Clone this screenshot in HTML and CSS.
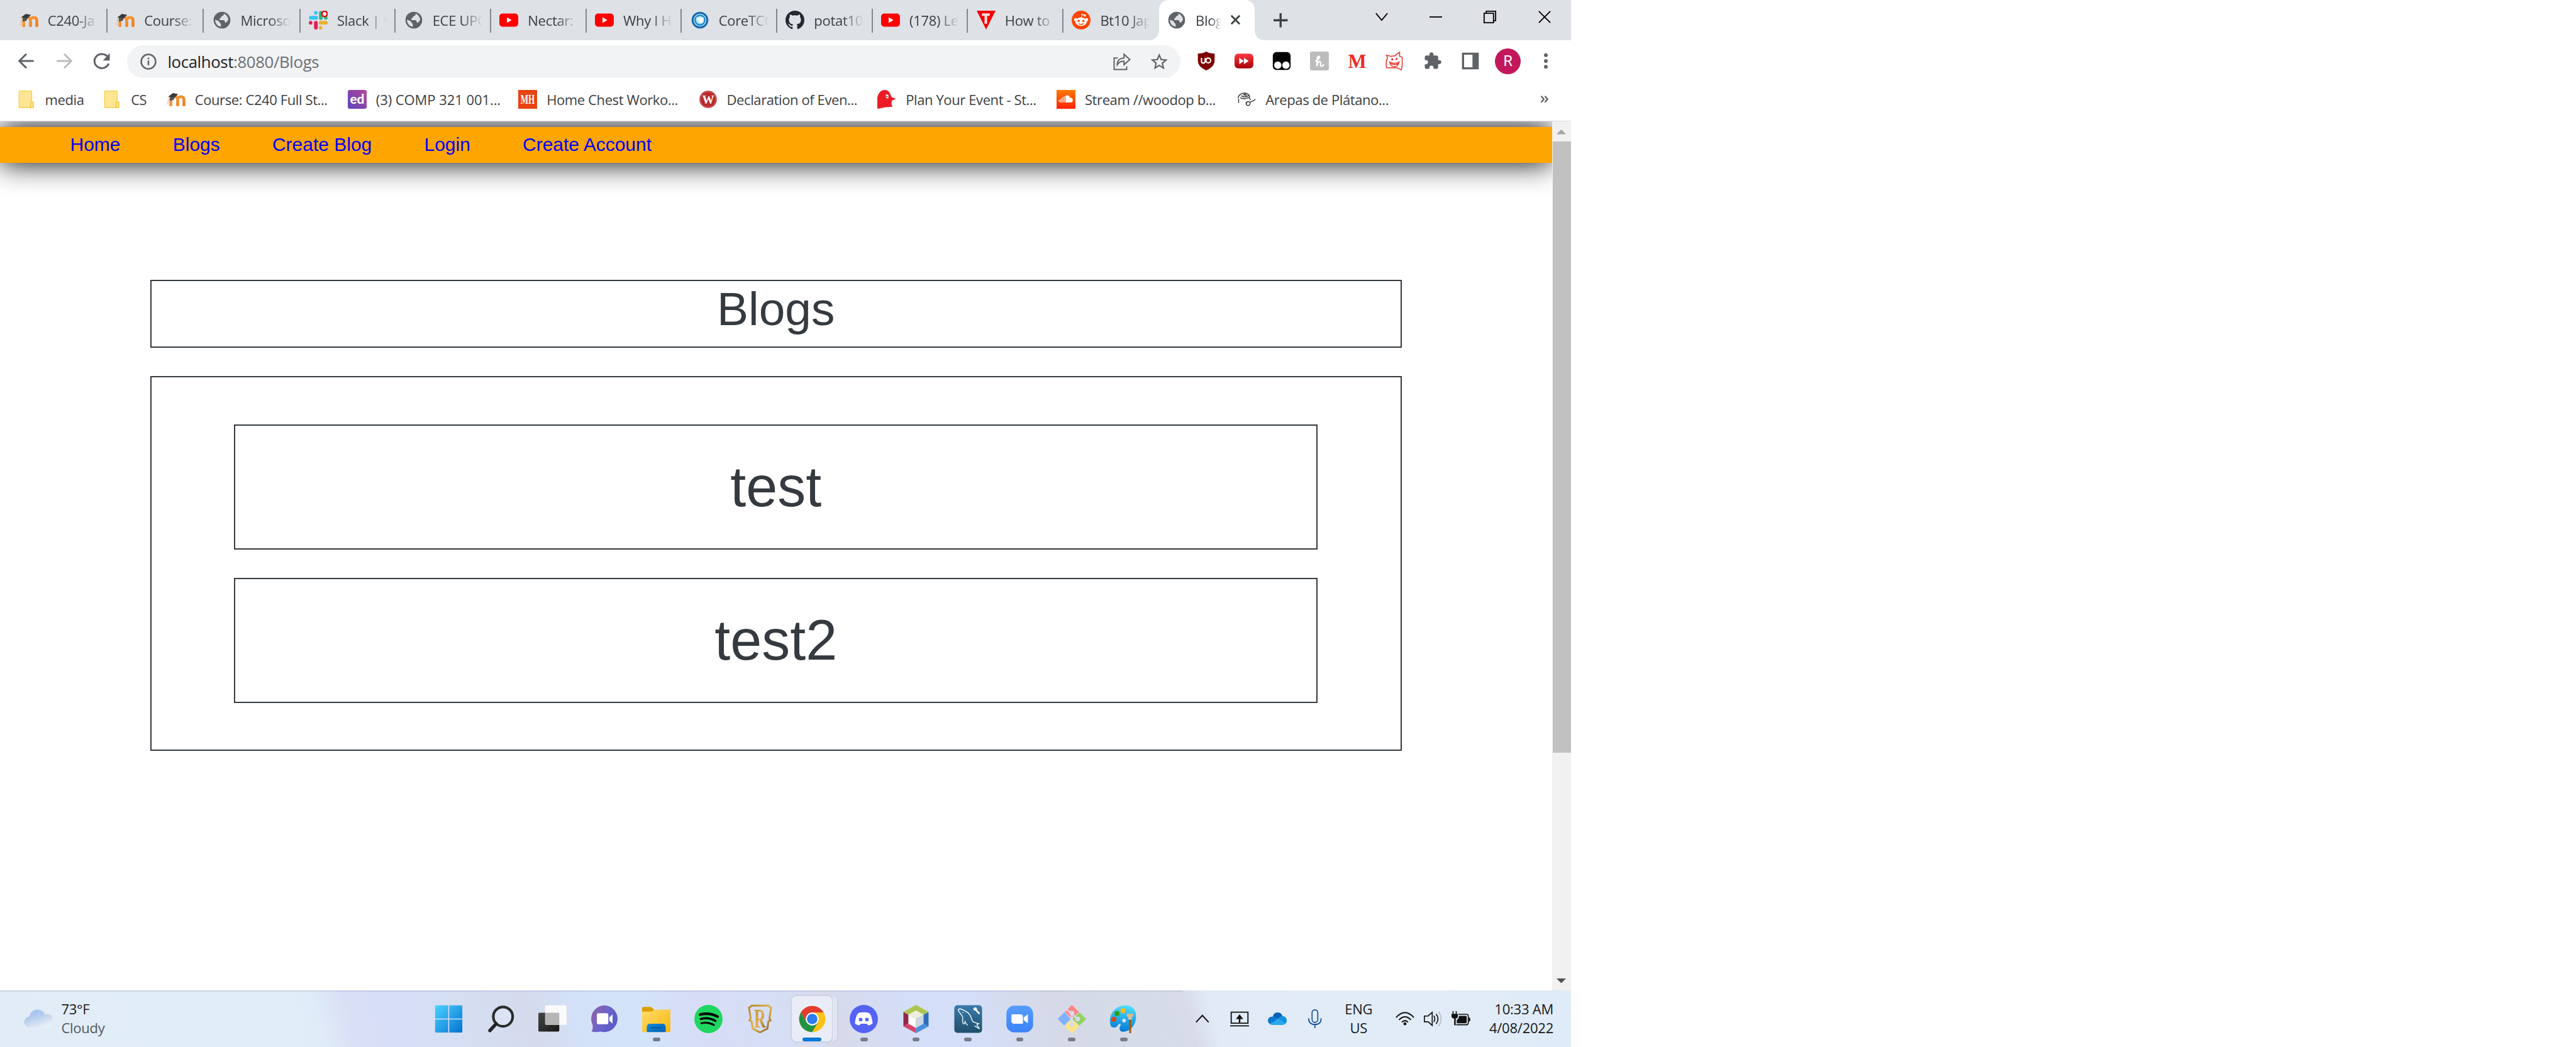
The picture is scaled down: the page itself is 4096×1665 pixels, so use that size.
FILE: index.html
```html
<!DOCTYPE html>
<html lang="en">
<head>
<meta charset="utf-8">
<title>Blogs</title>
<link rel="stylesheet" href="styles.css">
</head>
<body>
<svg class="defs" aria-hidden="true">
  <defs>
    <linearGradient id="g-orange" x1="0" y1="0" x2="1" y2="1"><stop offset="0" stop-color="#f9a13d"/><stop offset="1" stop-color="#ee7b1d"/></linearGradient>
    <linearGradient id="g-ed" x1="1" y1="0" x2="0" y2="1"><stop offset="0" stop-color="#b8439a"/><stop offset="1" stop-color="#5b46bd"/></linearGradient>
    <linearGradient id="g-sc" x1="0" y1="0" x2="0" y2="1"><stop offset="0" stop-color="#ff7a00"/><stop offset="1" stop-color="#ff2200"/></linearGradient>
    <linearGradient id="g-ff" x1="0" y1="0" x2="0" y2="1"><stop offset="0" stop-color="#fb3a41"/><stop offset="1" stop-color="#a90009"/></linearGradient>
    <linearGradient id="g-win" gradientUnits="userSpaceOnUse" x1="0" y1="0" x2="54" y2="54"><stop offset="0" stop-color="#4fd3ff"/><stop offset="1" stop-color="#0070d0"/></linearGradient>
    <linearGradient id="g-chat" x1="0" y1="0.2" x2="1" y2="0.8"><stop offset="0" stop-color="#8f62a8"/><stop offset=".5" stop-color="#6a63cc"/><stop offset="1" stop-color="#5658c8"/></linearGradient>
    <linearGradient id="g-folder" x1="0" y1="0" x2="1" y2="1"><stop offset="0" stop-color="#ffdc6b"/><stop offset="1" stop-color="#f9b60a"/></linearGradient>
    <linearGradient id="g-blue" x1="0" y1="0" x2="1" y2="1"><stop offset="0" stop-color="#118bdc"/><stop offset="1" stop-color="#0660b5"/></linearGradient>
    <linearGradient id="g-gold" x1="0" y1="0" x2="1" y2="1"><stop offset="0" stop-color="#b98628"/><stop offset=".5" stop-color="#e3b247"/><stop offset="1" stop-color="#84591a"/></linearGradient>
    <linearGradient id="g-sql" x1="0" y1="0" x2="0" y2="1"><stop offset="0" stop-color="#3a7ca8"/><stop offset="1" stop-color="#1f4f6c"/></linearGradient>
    <linearGradient id="g-zoom" x1="0" y1="0" x2="0" y2="1"><stop offset="0" stop-color="#559dff"/><stop offset="1" stop-color="#3c82fb"/></linearGradient>
    <linearGradient id="g-paint" x1=".6" y1="0" x2=".5" y2="1"><stop offset="0" stop-color="#4fe0ff"/><stop offset="1" stop-color="#0378d6"/></linearGradient>
    <linearGradient id="g-dark" x1="0" y1="0" x2="1" y2="1"><stop offset="0" stop-color="#474747"/><stop offset="1" stop-color="#181818"/></linearGradient>
    <linearGradient id="g-cloud" x1="0" y1="0" x2=".8" y2="1"><stop offset="0" stop-color="#9dbde4"/><stop offset="1" stop-color="#f0f4f9"/></linearGradient>
    <linearGradient id="g-cloud2" x1=".2" y1="0" x2=".5" y2="1"><stop offset="0" stop-color="#9fbfea"/><stop offset="1" stop-color="#cfe0f8"/></linearGradient>
    <radialGradient id="g-core"><stop offset="0" stop-color="#e8f8ff"/><stop offset=".45" stop-color="#9fdcf5"/><stop offset=".6" stop-color="#1188cc"/><stop offset="1" stop-color="#0c4a8c"/></radialGradient>
  </defs>
  <symbol id="moodle" viewBox="0 0 36 36"><path d="M8 31V19q0-6 6.500-6t6.500 6v12M21 31V19q0-6 6-6t6 6v12" fill="none" stroke="url(#g-orange)" stroke-width="5.500"/><path d="M3 13 12 6 22 8 14 16Z" fill="#3a3a3a"/><path d="M6 14v7l8-2v-5z" fill="#555"/><path d="M4 14 2 28" stroke="#e9b9a0" stroke-width="1.500"/></symbol>
  <symbol id="globe" viewBox="0 0 36 36"><circle cx="18" cy="18" r="16" fill="#5f6368"/><path d="M21 5.500c1 2 0 4-2 4.500-3 .5-2 3-4 4-3 1-2 4 1 4h5c2 1 3 3 3 5 3 0 4-3 6-5A13 13 0 0 0 21 5.500ZM5 17c4 2 8 2 8 5 0 2 4 2 3 5v4A13 13 0 0 1 5 17Z" fill="#dee1e6"/></symbol>
  <symbol id="slack" viewBox="0 0 36 36"><g stroke-width="7" stroke-linecap="round"><path d="M4 13.500h10M13.500 4v0" stroke="#36c5f0"/><path d="M23 4v10" stroke="#2eb67d"/><path d="M32.500 13.500v0" stroke="#2eb67d"/><path d="M22.500 23h10M22.500 32.500v0" stroke="#ecb22e"/><path d="M13.500 23v9.500M3.500 23v0" stroke="#e01e5a"/></g><circle cx="30" cy="6" r="5" fill="#fff" stroke="#e8050b" stroke-width="3"/></symbol>
  <symbol id="youtube" viewBox="0 0 36 36"><rect y="5.500" width="36" height="25" rx="6" fill="#f00"/><path d="M14.500 12.500 23.500 18l-9 5.500z" fill="#fff"/></symbol>
  <symbol id="core" viewBox="0 0 36 36"><circle cx="18" cy="18" r="15" fill="url(#g-core)" stroke="#2273b3" stroke-width="2"/><circle cx="18" cy="18" r="11.500" fill="none" stroke="#c8effc" stroke-width="1.500"/><path d="M11 13h14l-1 10h-7l-1-5h-4z" fill="#f4fcff"/></symbol>
  <symbol id="github" viewBox="0 0 16 16"><path fill="#24292f" d="M8 0C3.580 0 0 3.580 0 8c0 3.540 2.290 6.530 5.470 7.590.4.070.55-.17.55-.38 0-.19-.01-.82-.01-1.490-2.010.37-2.530-.49-2.690-.94-.09-.23-.48-.94-.82-1.130-.28-.15-.68-.52-.01-.53.63-.01 1.080.58 1.230.82.72 1.210 1.870.87 2.330.66.070-.52.280-.87.510-1.070-1.780-.2-3.640-.89-3.640-3.950 0-.87.310-1.590.82-2.150-.08-.2-.36-1.020.08-2.120 0 0 .67-.21 2.200.82.640-.18 1.320-.27 2-.27s1.360.09 2 .27c1.530-1.040 2.200-.82 2.200-.82.440 1.100.160 1.920.080 2.120.510.560.820 1.270.820 2.150 0 3.070-1.870 3.750-3.650 3.950.290.250.540.730.540 1.480 0 1.070-.01 1.930-.01 2.200 0 .210.150.460.550.380A8.010 8.010 0 0 0 16 8c0-4.420-3.580-8-8-8z"/></symbol>
  <symbol id="tri" viewBox="0 0 36 36"><path d="M0 0h36L18 36z" fill="#f40000"/><path d="M10 5h15v5h-5v15h-5V10h-5z" fill="#f3dede"/></symbol>
  <symbol id="reddit" viewBox="0 0 36 36"><circle cx="18" cy="18" r="18" fill="#ff4500"/><ellipse cx="18" cy="21" rx="11" ry="8" fill="#fff"/><circle cx="7.500" cy="17" r="3" fill="#fff"/><circle cx="28.500" cy="17" r="3" fill="#fff"/><circle cx="25" cy="9" r="2.200" fill="#fff"/><path d="m18 14 2-7 5 1.500" fill="none" stroke="#fff" stroke-width="1.500"/><circle cx="13.500" cy="19.500" r="2.200" fill="#ff4500"/><circle cx="22.500" cy="19.500" r="2.200" fill="#ff4500"/><path d="M13 24.500q5 3.500 10 0" fill="none" stroke="#ff4500" stroke-width="1.600"/></symbol>
  <symbol id="yfolder" viewBox="0 0 36 36"><path d="M5 2h22q1 0 1 1v20h3v10q0 1-1 1H5q-1 0-1-1V3q0-1 1-1z" fill="#ffe694" stroke="#f5d25a" stroke-width="1.800"/><path d="M26 34v-9q0-2 2.500-2T31 25v7q0 2-2 2z" fill="#ffe694" stroke="#f0c544" stroke-width="1.500"/></symbol>
  <symbol id="plan" viewBox="0 0 36 36"><path d="M0 36V14Q4 0 14 0q9 0 12 11l2 3 8 3-8 3-1 7 2 5-13 1z" fill="#ed1c24"/><path d="M16 9h5v7h-4z" fill="#fff"/><circle cx="18.500" cy="13" r="1.200" fill="#222"/></symbol>
  <symbol id="cloudwave" viewBox="0 0 36 36"><rect width="36" height="36" fill="url(#g-sc)"/><path d="M5 19v4M7.500 17v7M10 15v9M12.500 13v11M15 12v12" stroke="#fff" stroke-width="1.300"/><path d="M17 24V11q6-3 9 4 5 0 5 4.500T27 24z" fill="#fff"/></symbol>
  <symbol id="arepas" viewBox="0 0 36 36"><g fill="none" stroke="#333" stroke-width="1.700"><path d="M2 16c0-5 5-10 12-10s10 4 10 8M8 11c4 3 11 3 15-1M6 15c6 3 12 2 17-1M3 17v8M23 15l3 4M17 26c0-4 8-5 8-1s-3 6-6 4-1-4 0-4M25 23c4-1 7-2 10-5"/></g><path d="M11 9q5-4 9 1-5 3-9-1z" fill="#555"/></symbol>
  <symbol id="ublock" viewBox="0 0 36 36"><path d="M18 0q7 4 16 4v14q0 11-16 18Q2 29 2 18V4q9 0 16-4z" fill="#7e0000"/><path d="M9 12v7q0 3 3 3t4-3v-7" fill="none" stroke="#fff" stroke-width="2.600"/><circle cx="22" cy="17" r="4.500" fill="none" stroke="#fff" stroke-width="2.600"/></symbol>
  <symbol id="ffwd" viewBox="0 0 36 36"><rect y="4" width="36" height="28" rx="7" fill="url(#g-ff)"/><path d="m9 12 9 6-9 6zM18 12l9 6-9 6z" fill="#fff"/></symbol>
  <symbol id="tamper" viewBox="0 0 36 36"><rect x="1" y="1" width="34" height="34" rx="7" fill="#000"/><circle cx="10.500" cy="26" r="7" fill="#fff"/><circle cx="26" cy="26" r="7" fill="#fff"/></symbol>
  <symbol id="honey" viewBox="0 0 36 36"><rect width="36" height="36" rx="4" fill="#bcbcbc"/><path d="M11 18c6-3 9-8 6-9-4-1-3 8-4 19 1-6 4-10 6-9 3 1-1 9 3 9 1 0 3-1 4-3" fill="none" stroke="#fff" stroke-width="2.700" stroke-linecap="round"/></symbol>
  <symbol id="fox" viewBox="0 0 36 36"><g fill="none" stroke="#e5352b" stroke-width="1.800"><path d="M2 7 10 9 18 8 27 1V9l5 2v16l-2 8-8-4H2Q0 18 4 12z"/><path d="M8 20q9 5 18 0-2 9-9 9t-9-9zM10 23q8 4 14 0"/></g><circle cx="13" cy="15" r="2" fill="#e5352b"/><circle cx="21" cy="14" r="2" fill="#e5352b"/></symbol>
  <symbol id="puzzle" viewBox="0 0 24 24"><path fill="#5f6368" d="M20.500 11H19V7c0-1.100-.9-2-2-2h-4V3.500a2.500 2.500 0 0 0-5 0V5H4c-1.100 0-1.990.9-1.990 2v3.800H3.500c1.490 0 2.700 1.210 2.700 2.700s-1.210 2.700-2.700 2.700H2V20c0 1.100.9 2 2 2h3.800v-1.500c0-1.490 1.210-2.700 2.700-2.700s2.700 1.210 2.700 2.700V22H17c1.100 0 2-.9 2-2v-4h1.500a2.500 2.500 0 0 0 0-5z"/></symbol>
  <symbol id="panel" viewBox="0 0 36 36"><path fill="#5f6368" fill-rule="evenodd" d="M2 2h32v32H2zM6 6v24h16V6z"/></symbol>
  <symbol id="back" viewBox="0 0 36 36"><path d="M32 18H5M18 4.500 4.500 18 18 31.500" fill="none" stroke="currentColor" stroke-width="3.600"/></symbol>
  <symbol id="reload" viewBox="0 0 36 36"><path d="M31 23a14 13.500 0 1 1-2-13" fill="none" stroke="#5f6368" stroke-width="3.600"/><path d="M33 3v14H20z" fill="#5f6368"/></symbol>
  <symbol id="info" viewBox="0 0 36 36"><circle cx="18" cy="18" r="13.800" fill="none" stroke="#5f6368" stroke-width="3"/><path d="M18 16v9M18 10.500v3" stroke="#5f6368" stroke-width="3"/></symbol>
  <symbol id="share" viewBox="0 0 36 36"><path d="M10 11H3v22h24v-6M9 24C9 14 16 11 22 11V4l11 10-11 10v-7c-6 0-10 2-13 7z" fill="none" stroke="#5f6368" stroke-width="2.400"/></symbol>
  <symbol id="star" viewBox="0 0 24 24"><path fill="#5f6368" d="m22 9.240-7.190-.62L12 2 9.190 8.630 2 9.240l5.460 4.730L5.820 21 12 17.270 18.180 21l-1.630-7.030zM12 15.400l-3.760 2.270 1-4.280-3.320-2.880 4.380-.38L12 6.100l1.710 4.040 4.380.38-3.320 2.880 1 4.280z"/></symbol>
  <symbol id="start" viewBox="0 0 54 54"><path fill="url(#g-win)" d="M1 3q0-2 2-2h23v25H1zM28 1h23q2 0 2 2v23H28zM1 28h25v25H3q-2 0-2-2zM28 28h25v23q0 2-2 2H28z"/></symbol>
  <symbol id="search" viewBox="0 0 54 54"><circle cx="31" cy="22.500" r="18.500" fill="#dfe5f6" fill-opacity=".7" stroke="#2b2b2b" stroke-width="5"/><path d="M18 36 6 49" stroke="#242424" stroke-width="6.500" stroke-linecap="round"/></symbol>
  <symbol id="taskview" viewBox="0 0 54 54"><rect y="15" width="40" height="36" rx="2" fill="url(#g-dark)"/><rect x="13" y="1" width="41" height="37" rx="2" fill="#fafafa"/><path d="M13 15h25q2 0 2 2v21H15q-2 0-2-2z" fill="#b6b6b6"/></symbol>
  <symbol id="chat" viewBox="0 0 54 54"><path d="M27 1A25.500 25.500 0 1 1 19 51Q9 53 2 51 5 46 4 38A25.500 25.500 0 0 1 27 1z" fill="url(#g-chat)"/><rect x="12" y="16" width="22" height="21" rx="3" fill="#fff"/><path d="m36 24 6-6v18l-6-6z" fill="#fff"/></symbol>
  <symbol id="files" viewBox="0 0 54 54"><path d="M0 6q0-2 2-2h15l6 5v5H0z" fill="#dd9d04"/><path d="M0 13h18l5-4h29q2 0 2 2v39q0 2-2 2H2q-2 0-2-2z" fill="url(#g-folder)"/><path d="M9 52V43q0-7 6-7h24q6 0 6 7v9z" fill="url(#g-blue)"/><path d="M16 43.500h22" stroke="#07529b" stroke-width="2"/></symbol>
  <symbol id="spotify" viewBox="0 0 54 54"><circle cx="27" cy="27" r="27" fill="#1ed760"/><g fill="none" stroke="#000" stroke-linecap="round"><path d="M11 18.500q18-4.500 33.500 4" stroke-width="5"/><path d="M12.500 27q15-4 28 3.800" stroke-width="4.200"/><path d="M13.500 35q12-3 24 3.500" stroke-width="3.600"/></g></symbol>
  <symbol id="chrome" viewBox="0 0 54 54"><circle cx="27" cy="27" r="25" fill="#fbc116"/><path d="M5.350 14.500A25 25 0 0 1 48.650 14.500L27 14.500 16.200 33z" fill="#e33b2e"/><path d="M5.350 14.500A25 25 0 0 0 27 52L37.800 33.200 27 27 16.200 33.200z" fill="#229342"/><circle cx="27" cy="27" r="12.500" fill="#fff"/><circle cx="27" cy="27" r="10" fill="#2d7cf0"/></symbol>
  <symbol id="discord" viewBox="0 0 54 54"><circle cx="27" cy="27" r="27" fill="#5562f6"/><path d="M18 15q9-2 18 0 6 2 8 20-4 4-9 4l-2-3h-12l-2 3q-5 0-9-4 2-18 8-20z" fill="#fff"/><circle cx="21" cy="28" r="3.500" fill="#5562f6"/><circle cx="33" cy="28" r="3.500" fill="#5562f6"/></symbol>
  <symbol id="netbeans" viewBox="0 0 54 54"><path d="M27 0 51 13.500 27 27 3 13.500z" fill="#aec64f"/><path d="M3 13.500 27 27 3 41z" fill="#932845"/><path d="M3 41 27 27v27z" fill="#d5446a"/><path d="M27 54V27l24 14z" fill="#478fdf"/><path d="M51 41 27 27l24-13.500z" fill="#2f6dba"/><path d="m27 10.500 14.500 8L27 27l-14.500-8.500z" fill="#ecefde"/><path d="M12.500 18.500 27 27v17l-14.500-8z" fill="#fbfbfb"/><path d="M41.500 18.500 27 27v17l14.500-8z" fill="#ccd7e3"/></symbol>
  <symbol id="mysql" viewBox="0 0 54 54"><rect x=".5" y=".5" width="53" height="53" rx="6" fill="url(#g-sql)"/><g fill="none" stroke="#eaf6fb" stroke-width="1.700"><path d="M26 39c-2-2-4-3-5-7-1 3-1 5-3 4-4-3 0-9-2-14-2-4-8-9-8-13 3-4 9 1 14 3 9 4 11 13 13 19 2 2 8 4 12 5-3 1-4 2-3 3s3 4 5 7c-4-3-8-4-10-6"/></g><circle cx="17" cy="14.500" r="1" fill="#fff"/><path d="M38 6c3-3 7 1 6 4l6 6-3 2-6-7c-4 0-5-3-4-5l3 2z" fill="#fff"/></symbol>
  <symbol id="zoom" viewBox="0 0 54 54"><rect x="1.500" y="1.500" width="51" height="51" rx="15" fill="url(#g-zoom)"/><path d="M14 18h14q5 0 5 5v13H16q-5 0-5-5V21q0-3 3-3z" fill="#fff"/><path d="m34.500 24 8-6v17l-8-6z" fill="#fff"/></symbol>
  <symbol id="git" viewBox="0 0 54 54"><path d="m27 0 13.500 13.500L27 26 13.500 13.500z" fill="#ff8585"/><path d="m12.500 13.500 12 13.500-12.500 12.500L0 27z" fill="#80b1ff"/><path d="M41.500 14.500 54 27 41.500 39.500 28 27z" fill="#8ed35c"/><path d="m27 28 13.500 13L27 54 13.500 41z" fill="#ffe57e"/><g stroke="#d9dbe8" stroke-width="3" fill="#d9dbe8"><path d="m16 8 11 9v20M27 17l11 10" fill="none"/><circle cx="27" cy="16" r="3"/><circle cx="38" cy="27" r="3"/><circle cx="27" cy="38" r="3"/></g></symbol>
  <symbol id="paint" viewBox="0 0 54 54"><path d="M2 38C-3 18 12 1 31 1c14 0 20 9 20 21 0 17-10 27-22 29-8 2-11-4-9-9 2-4 2-6 0-6-4 0-4 7-9 7-5 1-8-1-9-5z" fill="url(#g-paint)"/><circle cx="28" cy="30" r="3.500" fill="#d9e4f3"/><circle cx="26" cy="11" r="4.800" fill="#f9b80c"/><circle cx="14.500" cy="16.500" r="4.800" fill="#2f9f16"/><circle cx="8.500" cy="27.500" r="4.800" fill="#d44a14"/><path d="M37 26h5l-.500 28h-3.500z" fill="#a85c0a"/><path d="M36.500 25h6v3h-6z" fill="#d5d8dc"/><path d="M33 17h13q-1 5-3.500 8h-6Q33 22 33 17z" fill="#e6b98a"/></symbol>
  <symbol id="weather" viewBox="0 0 54 36"><circle cx="26" cy="16" r="15.500" fill="url(#g-cloud2)"/><path d="M12 14a12 11 0 0 1 12 7h6q2-11 12-11a12 12 0 0 1 6 24q-2 1-6 1H10A10.500 10.500 0 0 1 12 14z" fill="url(#g-cloud)"/></symbol>
  <symbol id="upload" viewBox="0 0 36 30"><path d="M2 2h32v21H2zM0 28h36" fill="none" stroke="#111" stroke-width="2.200"/><path d="m18 6 7 9h-5.500v7h-3v-7H11z" fill="#111"/></symbol>
  <symbol id="onedrive" viewBox="0 0 36 24"><path d="M9 9Q11 0 19 0q7 0 9 8l-9 5z" fill="#0a60b8"/><path d="M7 23A7.500 7.500 0 0 1 8 8q6-1 11 4l-12 11z" fill="#0b78d0"/><path d="M19 13q3-6 9-6 8 1 8 9 0 7-7 7z" fill="#1490df"/><path d="M4 22 20 12l14 9q-2 3-6 3H8q-3 0-4-2z" fill="#29a8ec"/></symbol>
  <symbol id="mic" viewBox="0 0 26 36"><rect x="7.500" y="1" width="11" height="24" rx="5.500" fill="none" stroke="#0b4a9e" stroke-width="2"/><path d="M1 17q0 12 12 12t12-12M13 29v7" fill="none" stroke="#0b4a9e" stroke-width="2"/></symbol>
  <symbol id="wifi" viewBox="0 0 36 26"><g fill="none" stroke="#111" stroke-width="2.400"><path d="M1 11Q18-8 35 11M6.500 15.500q11.500-12 23 0M12 20q6-6 12 0"/></g><circle cx="18" cy="23" r="2.800" fill="#111"/></symbol>
  <symbol id="sound" viewBox="0 0 36 32"><path d="M1 10.500h7l8-7v25l-8-7H1z" fill="none" stroke="#111" stroke-width="2"/><path d="M19 10q4 6 0 12M23.500 6.500q7 9.500 0 19" fill="none" stroke="#111" stroke-width="2"/><path d="M28 2q10 14 0 28" fill="none" stroke="#b5bdc6" stroke-width="2"/></symbol>
  <symbol id="battery" viewBox="0 0 36 28"><path d="M3 0v5M9 0v5" stroke="#111" stroke-width="2"/><path d="M0 5h12v5q0 4-4 4v13H5V14q-5 0-5-4z" fill="#111"/><path d="M13 6h16q3 0 3 4v12q0 4-3 4H9" fill="none" stroke="#111" stroke-width="2"/><path d="M14 9h13q2 0 2 2v10q0 2-2 2H10v-6q4-2 4-8z" fill="#111"/><path d="M33 12q3 0 3 4t-3 4z" fill="#111"/></symbol>
</svg>

<div class="screen">
  <header class="tabstrip">
    <div class="tab tab-wide"><svg class="fav"><use href="#moodle"/></svg><span class="tab-title">C240-Ja</span></div>
    <div class="tab tab-wide"><svg class="fav"><use href="#moodle"/></svg><span class="tab-title">Course:</span></div>
    <div class="tab tab-wide"><svg class="fav"><use href="#globe"/></svg><span class="tab-title">Microso</span></div>
    <div class="tab"><svg class="fav"><use href="#slack"/></svg><span class="tab-title">Slack | *</span></div>
    <div class="tab"><svg class="fav"><use href="#globe"/></svg><span class="tab-title">ECE UPC</span></div>
    <div class="tab"><svg class="fav"><use href="#youtube"/></svg><span class="tab-title">Nectar:</span></div>
    <div class="tab"><svg class="fav"><use href="#youtube"/></svg><span class="tab-title">Why I H</span></div>
    <div class="tab"><svg class="fav"><use href="#core"/></svg><span class="tab-title">CoreTCC</span></div>
    <div class="tab"><svg class="fav"><use href="#github"/></svg><span class="tab-title">potat10</span></div>
    <div class="tab"><svg class="fav"><use href="#youtube"/></svg><span class="tab-title">(178) Le</span></div>
    <div class="tab"><svg class="fav"><use href="#tri"/></svg><span class="tab-title">How to</span></div>
    <div class="tab tab-last"><svg class="fav"><use href="#reddit"/></svg><span class="tab-title">Bt10 Jap</span></div>
    <div class="tab tab-active"><svg class="fav"><use href="#globe"/></svg><span class="tab-title">Blog</span>
      <svg class="tab-close" viewBox="0 0 18 18"><path d="m1 1 16 16M17 1 1 17"/></svg></div>
    <svg class="new-tab" viewBox="0 0 27 27"><path d="M13.500 0v27M0 13.500h27"/></svg>
    <div class="window-buttons">
      <svg viewBox="0 0 24 24"><path d="m1 5 11 13L23 5"/></svg>
      <svg viewBox="0 0 24 24"><path d="M0 12h24"/></svg>
      <svg viewBox="0 0 24 24"><path d="M1 5h18v18H1zM5 5V1h18v18h-4"/></svg>
      <svg viewBox="0 0 24 24"><path d="m1 1 22 22M23 1 1 23"/></svg>
    </div>
  </header>

  <div class="toolbar">
    <div class="nav-buttons">
      <svg class="ic"><use href="#back"/></svg>
      <svg class="ic forward"><use href="#back"/></svg>
      <svg class="ic"><use href="#reload"/></svg>
    </div>
    <div class="omnibox">
      <svg class="ic"><use href="#info"/></svg>
      <span class="url">localhost<span class="url-path">:8080/Blogs</span></span>
      <svg class="ic"><use href="#share"/></svg>
      <svg class="ic star"><use href="#star"/></svg>
    </div>
    <div class="extensions">
      <svg class="ic"><use href="#ublock"/></svg>
      <svg class="ic"><use href="#ffwd"/></svg>
      <svg class="ic"><use href="#tamper"/></svg>
      <svg class="ic"><use href="#honey"/></svg>
      <svg class="ic" viewBox="0 0 36 36"><text x="18" y="31" text-anchor="middle" class="i-serif" font-size="37" fill="#ee2a24">M</text></svg>
      <svg class="ic"><use href="#fox"/></svg>
      <svg class="ic"><use href="#puzzle"/></svg>
      <svg class="ic"><use href="#panel"/></svg>
      <span class="avatar">R</span>
      <svg class="ic" viewBox="0 0 36 36"><g fill="#5f6368"><circle cx="18" cy="7" r="3.600"/><circle cx="18" cy="18" r="3.600"/><circle cx="18" cy="29" r="3.600"/></g></svg>
    </div>
  </div>

  <div class="bookmarks">
    <span class="bm"><svg class="fav"><use href="#yfolder"/></svg>media</span>
    <span class="bm"><svg class="fav"><use href="#yfolder"/></svg>CS</span>
    <span class="bm"><svg class="fav"><use href="#moodle"/></svg>Course: C240 Full St...</span>
    <span class="bm bm-caps"><svg class="fav" viewBox="0 0 36 36"><rect width="36" height="36" rx="4" fill="url(#g-ed)"/><text x="18" y="27" text-anchor="middle" class="i-lato" font-size="25" fill="#fff">ed</text></svg>(3) COMP 321 001...</span>
    <span class="bm"><svg class="fav" viewBox="0 0 36 36"><rect width="36" height="36" fill="#ea4313"/><text x="18" y="27" text-anchor="middle" class="i-serif" font-size="26" textLength="27" lengthAdjust="spacingAndGlyphs" fill="#fff">MH</text></svg>Home Chest Worko...</span>
    <span class="bm"><svg class="fav" viewBox="0 0 36 36"><circle cx="18" cy="18" r="16.500" fill="#b92d2d"/><circle cx="18" cy="18" r="15" fill="none" stroke="#d67070"/><text x="18" y="26" text-anchor="middle" class="i-serif" font-size="23" fill="#fff">W</text></svg>Declaration of Even...</span>
    <span class="bm"><svg class="fav"><use href="#plan"/></svg>Plan Your Event - St...</span>
    <span class="bm"><svg class="fav"><use href="#cloudwave"/></svg>Stream //woodop b...</span>
    <span class="bm"><svg class="fav"><use href="#arepas"/></svg>Arepas de Plátano...</span>
    <svg class="more" viewBox="0 0 16 14"><path d="m2 1 5 6-5 6M9 1l5 6-5 6"/></svg>
  </div>

  <div class="viewport">
    <div class="page">
      <nav class="site-nav">
        <a href="#">Home</a><a href="#">Blogs</a><a href="#">Create Blog</a><a href="#">Login</a><a href="#">Create Account</a>
      </nav>
      <main class="content">
        <h1 class="page-title">Blogs</h1>
        <section class="blog-list">
          <article class="blog">test</article>
          <article class="blog">test2</article>
        </section>
      </main>
    </div>
    <div class="scrollbar">
      <svg class="arrow up" viewBox="0 0 18 9"><path d="M0 9 9 0l9 9z"/></svg>
      <div class="thumb"></div>
      <svg class="arrow down" viewBox="0 0 18 9"><path d="m0 0 9 9 9-9z"/></svg>
    </div>
  </div>

  <footer class="taskbar">
    <svg class="weather-icon"><use href="#weather"/></svg>
    <div class="weather"><span>73°F</span><span class="muted">Cloudy</span></div>
    <div class="apps">
      <div class="app"><svg><use href="#start"/></svg></div>
      <div class="app"><svg><use href="#search"/></svg></div>
      <div class="app"><svg><use href="#taskview"/></svg></div>
      <div class="app"><svg><use href="#chat"/></svg></div>
      <div class="app running"><svg><use href="#files"/></svg></div>
      <div class="app"><svg><use href="#spotify"/></svg></div>
      <div class="app"><svg viewBox="0 0 54 54"><path d="M11 1.500h32l5 4-3 20 2 4-4 2-2 14-14 7-14-7-2-14-4-2 2-4-3-20z" fill="none" stroke="url(#g-gold)" stroke-width="3.500"/><text x="27" y="43" text-anchor="middle" class="i-serif" font-size="50" textLength="22" lengthAdjust="spacingAndGlyphs" fill="url(#g-gold)">R</text></svg></div>
      <div class="app running current"><svg><use href="#chrome"/></svg></div>
      <div class="app running"><svg><use href="#discord"/></svg></div>
      <div class="app running"><svg><use href="#netbeans"/></svg></div>
      <div class="app running"><svg><use href="#mysql"/></svg></div>
      <div class="app running"><svg><use href="#zoom"/></svg></div>
      <div class="app running"><svg><use href="#git"/></svg></div>
      <div class="app running"><svg><use href="#paint"/></svg></div>
    </div>
    <div class="tray">
      <svg class="t-chevron" viewBox="0 0 26 15"><path d="m1 14 12-13 12 13"/></svg>
      <svg class="t-upload"><use href="#upload"/></svg>
      <svg class="t-drive"><use href="#onedrive"/></svg>
      <svg class="t-mic"><use href="#mic"/></svg>
      <div class="lang"><span>ENG</span><span>US</span></div>
      <svg class="t-wifi"><use href="#wifi"/></svg>
      <svg class="t-sound"><use href="#sound"/></svg>
      <svg class="t-battery"><use href="#battery"/></svg>
      <div class="clock"><span>10:33 AM</span><span>4/08/2022</span></div>
    </div>
  </footer>
</div>
</body>
</html>
```
FILE: styles.css
```css
* { box-sizing: border-box; }

html { font-size: calc(100vw / 492); }

body {
  margin: 0;
  background: #fff;
  overflow: hidden;
  font-family: "Open Sans", "Noto Sans", sans-serif;
}

svg { display: block; flex: none; overflow: visible; }
svg text { letter-spacing: 0; }
.defs { position: absolute; width: 0; height: 0; }
.i-lato { font-family: Lato, sans-serif; font-weight: 900; }
.i-serif { font-family: "Liberation Serif", serif; font-weight: 700; }

.screen {
  width: 300rem;
  height: 200rem;
  display: flex;
  flex-direction: column;
}

.fav, .ic { width: 3.6rem; height: 3.6rem; }

/* Tab strip */
.tabstrip {
  height: 7.7rem;
  flex: none;
  display: flex;
  padding-left: 2.1rem;
  background: #dee1e6;
}
.tab {
  position: relative;
  width: 18.22rem;
  flex: none;
  display: flex;
  align-items: center;
  gap: 1.8rem;
  padding: 0 0 0.1rem 1.6rem;
}
.tab-wide { width: 18.43rem; }
.tab:not(.tab-last):not(.tab-active)::after {
  content: "";
  position: absolute;
  right: 0;
  top: 1.7rem;
  width: 0.24rem;
  height: 4.5rem;
  background: #84878c;
}
.tab-title {
  width: 9.5rem;
  overflow: hidden;
  white-space: pre;
  font-size: 2.65rem;
  letter-spacing: -0.04rem;
  color: #3c4043;
  -webkit-mask-image: linear-gradient(90deg, #000 58%, transparent);
  mask-image: linear-gradient(90deg, #000 58%, transparent);
}
.tab-active {
  width: 18.3rem;
  background: #fff;
  border-radius: 1.8rem 1.8rem 0 0;
}
.tab-active::before, .tab-active::after {
  content: "";
  position: absolute;
  bottom: 0;
  width: 1.8rem;
  height: 1.8rem;
}
.tab-active::before {
  left: -1.8rem;
  background: radial-gradient(circle at 0 0, transparent 1.75rem, #fff 1.8rem);
}
.tab-active::after {
  right: -1.8rem;
  background: radial-gradient(circle at 100% 0, transparent 1.75rem, #fff 1.8rem);
}
.tab-active .tab-title { width: 4.9rem; }
.tab-close { width: 1.8rem; height: 1.8rem; }
.tab-close path { stroke: #3c4043; stroke-width: 3.4; }
.new-tab { width: 2.7rem; height: 2.7rem; margin: 2.5rem 0 0 3.6rem; }
.new-tab path { stroke: #3c4043; stroke-width: 4; }
.window-buttons {
  flex: 1;
  display: flex;
  justify-content: flex-end;
  gap: 7.95rem;
  padding: 2.1rem 3.85rem 0 0;
}
.window-buttons svg { width: 2.4rem; height: 2.4rem; }
.window-buttons path { fill: none; stroke: #000; stroke-width: 2.2; }

/* Toolbar */
.toolbar {
  height: 8rem;
  flex: none;
  display: flex;
  align-items: center;
}
.nav-buttons {
  display: flex;
  gap: 3.6rem;
  width: 24.3rem;
  padding-left: 3.2rem;
  color: #5f6368;
}
.forward { color: #babcbe; transform: scaleX(-1); }
.omnibox {
  width: 201.2rem;
  height: 6.3rem;
  margin-top: 0.2rem;
  border-radius: 3.15rem;
  background: #f1f3f4;
  display: flex;
  align-items: center;
  padding: 0 2.1rem 0 2.3rem;
}
.url {
  flex: 1;
  padding-left: 1.8rem;
  font-size: 3.1rem;
  letter-spacing: -0.045rem;
  color: #202124;
}
.url-path { color: #6b6f74; }
.omnibox .star { width: 3.9rem; height: 3.9rem; margin-left: 3.4rem; }
.extensions {
  display: flex;
  align-items: center;
  gap: 3.6rem;
  padding-left: 3.1rem;
}
.avatar {
  width: 5rem;
  height: 5rem;
  margin: 0 -0.7rem;
  border-radius: 50%;
  background: #c2185b;
  color: #fff;
  font: 2.8rem/5rem Roboto, sans-serif;
  text-align: center;
}

/* Bookmarks */
.bookmarks {
  height: 7.5rem;
  flex: none;
  display: grid;
  grid-template-columns: 16.4rem 12.2rem 34.6rem 32.6rem 34.4rem 34.2rem 34.2rem 34.5rem 57.9rem 1.6rem;
  align-items: center;
  padding: 0 0 0.9rem 3.2rem;
  border-bottom: 0.2rem solid #dadada;
}
.bm {
  display: flex;
  align-items: center;
  gap: 1.8rem;
  white-space: nowrap;
  font-size: 2.65rem;
  letter-spacing: -0.05rem;
  color: #3c4043;
}
.bm-caps { letter-spacing: -0.01rem; }
.more { width: 1.6rem; height: 1.4rem; }
.more path { fill: none; stroke: #5f6368; stroke-width: 2.8; }

/* Web page */
.viewport { flex: 1; display: flex; min-height: 0; }
.page {
  width: 296.4rem;
  overflow: hidden;
  padding-top: 1.1rem;
  font-family: "Liberation Sans", Arial, sans-serif;
}
.site-nav {
  height: 6.8rem;
  display: flex;
  align-items: center;
  gap: 10rem;
  padding: 0 0 0.2rem 13.4rem;
  background: orange;
  box-shadow: 0 0 5.625rem #000;
  font-size: 3.6rem;
}
.site-nav a { color: #00f; text-decoration: none; }
.content { padding: 22.3rem 28.7rem 0; color: #343a40; }
.page-title {
  height: 13rem;
  margin: 0 0 5.4rem;
  border: 0.25rem solid #343a40;
  font-size: 9rem;
  font-weight: 400;
  line-height: 1.2;
  text-align: center;
}
.blog-list {
  display: flex;
  flex-direction: column;
  gap: 5.4rem;
  padding: 9rem 15.8rem;
  border: 0.25rem solid #343a40;
}
.blog {
  height: 23.9rem;
  border: 0.25rem solid #343a40;
  font-size: 10.8rem;
  line-height: 23.5rem;
  text-align: center;
}

.scrollbar {
  width: 3.6rem;
  background: #f1f1f1;
  display: flex;
  flex-direction: column;
  align-items: center;
}
.arrow { width: 1.8rem; height: 0.9rem; }
.up { margin: 1.5rem 0 1.4rem; fill: #a3a3a3; }
.thumb {
  width: 3.4rem;
  height: 116.8rem;
  align-self: flex-end;
  background: #c1c1c1;
}
.down { margin: auto 0 1.4rem; fill: #505050; }

/* Taskbar */
.taskbar {
  position: relative;
  height: 10.8rem;
  flex: none;
  display: flex;
  align-items: center;
  font-size: 2.65rem;
  line-height: 3.6rem;
  letter-spacing: -0.03rem;
  color: #191919;
  background: linear-gradient(75deg, #e1ecf6 0%, #e1eef9 19%, #dfecf8 20.500%, #dadff5 22.5%, #d5def7 25%, #d5dff3 29%, #d6daed 34%, #d3e1f8 37%, #d2e4fa 40.500%, #d7dcf5 45%, #d5dff6 49%, #d8daeb 53%, #d4def8 58%, #d4dff9 61.500%, #d6d9e7 67%, #d5dce8 73%, #d9dbea 75.500%, #e1eaf6 77%, #e2ecf7 84%, #dfebf8 100%);
}
.taskbar::before {
  content: "";
  position: absolute;
  left: 0;
  top: 0;
  width: 225.9rem;
  height: 0.2rem;
  background: rgba(150, 165, 195, 0.3);
}
.weather-icon { width: 5.4rem; height: 3.6rem; margin: 0 1.7rem 0 4.6rem; }
.weather { width: 70.15rem; flex: none; display: flex; flex-direction: column; }
.muted { color: #55595e; }
.apps { display: flex; align-items: center; gap: 2.22rem; width: 146.45rem; flex: none; }
.app {
  position: relative;
  width: 7.7rem;
  height: 8.7rem;
  flex: none;
  display: flex;
  align-items: center;
  justify-content: center;
}
.app svg { position: relative; width: 5.4rem; height: 5.4rem; }
.running::after {
  content: "";
  position: absolute;
  left: 50%;
  bottom: 0;
  width: 1.4rem;
  height: 0.7rem;
  margin-left: -0.7rem;
  border-radius: 0.35rem;
  background: #777c88;
}
.current { background: #eaedf7; border-radius: 0.9rem; box-shadow: 0 0 0 0.2rem #cbd2e6; }
.current::before {
  content: "";
  position: absolute;
  right: -0.9rem;
  top: 0;
  width: 0.8rem;
  height: 8.7rem;
  border-radius: 0 0.9rem 0.9rem 0;
  background: #e2e6f3;
  box-shadow: 0.1rem 0.1rem 0 0.1rem #cbd2e6;
}
.current::after { width: 3.6rem; margin-left: -1.8rem; background: #0078d7; }

.tray { flex: 1; display: flex; align-items: center; }
.t-chevron { width: 2.6rem; height: 1.5rem; margin-right: 4.1rem; }
.t-chevron path { fill: none; stroke: #111; stroke-width: 2.4; }
.t-upload { width: 3.6rem; height: 3rem; margin-right: 3.6rem; }
.t-drive { width: 3.6rem; height: 2.4rem; margin-right: 4.1rem; }
.t-mic { width: 2.6rem; height: 3.6rem; }
.lang { width: 14rem; display: flex; flex-direction: column; text-align: center; }
.t-wifi { width: 3.6rem; height: 2.6rem; margin-right: 1.8rem; }
.t-sound { width: 3.6rem; height: 3.2rem; margin-right: 1.8rem; }
.t-battery { width: 3.6rem; height: 2.8rem; }
.clock { flex: 1; display: flex; flex-direction: column; text-align: right; padding-right: 3.3rem; white-space: nowrap; }
```
